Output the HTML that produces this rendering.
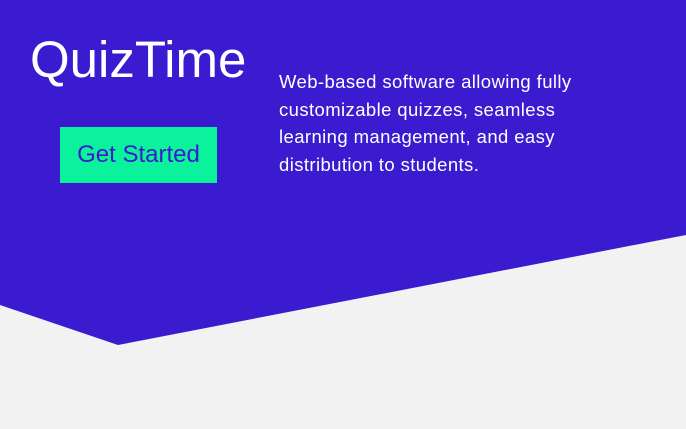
<!DOCTYPE html>
<html><head><style>
html,body{margin:0;padding:0;width:686px;height:429px;overflow:hidden;background:#f2f2f2;font-family:"Liberation Sans",Arial,sans-serif;}
svg{position:absolute;left:0;top:0}
h1{position:absolute;left:30px;top:30px;margin:0;font-weight:normal;font-size:51px;color:#fff;line-height:60px;letter-spacing:0px}
.btn{position:absolute;left:60px;top:127px;width:157px;height:56px;background:#0af39c;color:#3b1bd0;font-size:24px;line-height:56px;text-align:center}
p{position:absolute;left:279px;top:68px;margin:0;width:340px;color:#fff;font-size:18.5px;line-height:27.7px;letter-spacing:0.4px}
</style></head><body>
<svg width="686" height="429"><polygon points="0,0 686,0 686,235 118,345 0,305" fill="#3b1bd0"/></svg>
<h1>QuizTime</h1>
<div class="btn">Get Started</div>
<p>Web-based software allowing fully<br>customizable quizzes, seamless<br>learning management, and easy<br>distribution to students.</p>
</body></html>
